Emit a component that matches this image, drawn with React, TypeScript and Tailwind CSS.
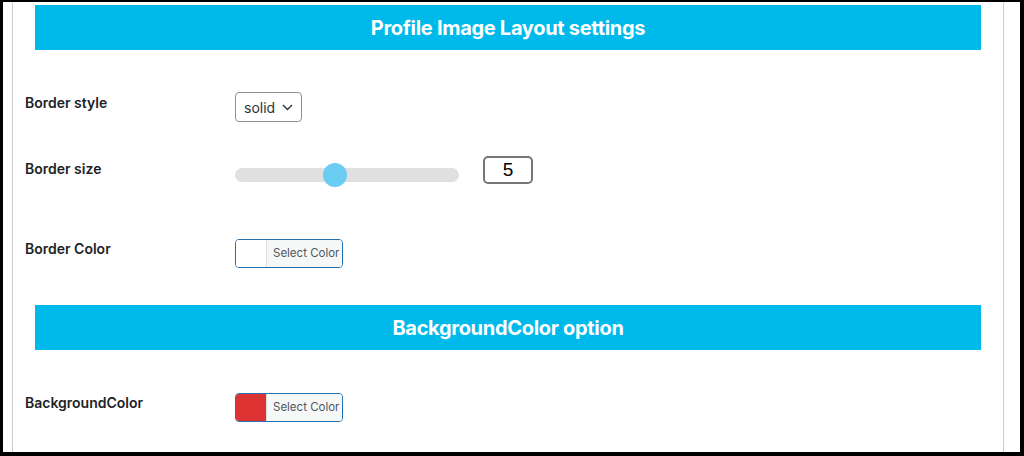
import React from 'react';

const font = { fontFamily: 'Inter, "Noto Sans", sans-serif' };

const SectionHeader: React.FC<{ title: string }> = ({ title }) => (
  <div className="mx-[22px] h-[45px] bg-[#00b9eb] flex items-center justify-center">
    <h2 className="text-white font-bold text-[20px] tracking-[-0.3px] pt-[1px]">{title}</h2>
  </div>
);

const Label: React.FC<{ text: string; className?: string }> = ({ text, className = '' }) => (
  <div className={`w-[222px] pl-3 text-[14px] leading-4 font-semibold text-[#1d2327] ${className}`}>{text}</div>
);

const ColorButton: React.FC<{ swatch: string }> = ({ swatch }) => (
  <button className="flex h-[29px] w-[108px] rounded-[4px] border border-[#2271b1] overflow-hidden">
    <span className={`w-[30px] h-full shrink-0 ${swatch}`} />
    <span className="flex-1 h-full flex items-center pl-[6px] bg-[#f6f7f7] border-l border-[#dcdcde] text-[11.5px] whitespace-nowrap text-[#50575e]">
      Select Color
    </span>
  </button>
);

const App: React.FC = () => {
  return (
    <div
      className="w-[1024px] h-[456px] bg-white border-black border-l-[3px] border-t-2 border-r-4 border-b-4 flex"
      style={font}
    >
      <div className="ml-[9px] w-[992px] h-full border-x border-[#cccccc]">
        <div className="mt-[3px]">
          <SectionHeader title="Profile Image Layout settings" />
        </div>

        {/* Border style */}
        <div className="flex items-start mt-[42px]">
          <Label text="Border style" className="pt-[3px]" />
          <div className="h-[30px] w-[67px] rounded-[4px] border border-[#8c8f94] flex items-center pl-[8px] gap-[7px] text-[14px] text-[#2c3338]">
            solid
            <svg width="11" height="7" viewBox="0 0 11 7" fill="none">
              <path d="M1 1l4.5 4.5L10 1" stroke="#2c3338" strokeWidth="1.4" />
            </svg>
          </div>
        </div>

        {/* Border size */}
        <div className="flex items-start mt-[34px]">
          <Label text="Border size" className="pt-[5px]" />
          <div className="relative mt-[12px] w-[224px] h-[14px] rounded-full bg-[#e0e0e0]">
            <div className="absolute left-[88px] top-[-5px] w-[24px] h-[24px] rounded-full bg-[#6ccdf2]" />
          </div>
          <div
            className="ml-[24px] w-[50px] h-[28px] rounded-[5px] border-2 border-[#767676] flex items-center justify-center text-[19px] text-black"
            style={{ fontFamily: '"Liberation Sans", Arial, sans-serif' }}
          >
            5
          </div>
        </div>

        {/* Border Color */}
        <div className="flex items-start mt-[55px]">
          <Label text="Border Color" className="pt-[2px]" />
          <ColorButton swatch="bg-white" />
        </div>

        <div className="mt-[37px]">
          <SectionHeader title="BackgroundColor option" />
        </div>

        {/* BackgroundColor */}
        <div className="flex items-start mt-[43px]">
          <Label text="BackgroundColor" className="pt-[2px]" />
          <ColorButton swatch="bg-[#dd3333]" />
        </div>
      </div>
    </div>
  );
};

export default App;
